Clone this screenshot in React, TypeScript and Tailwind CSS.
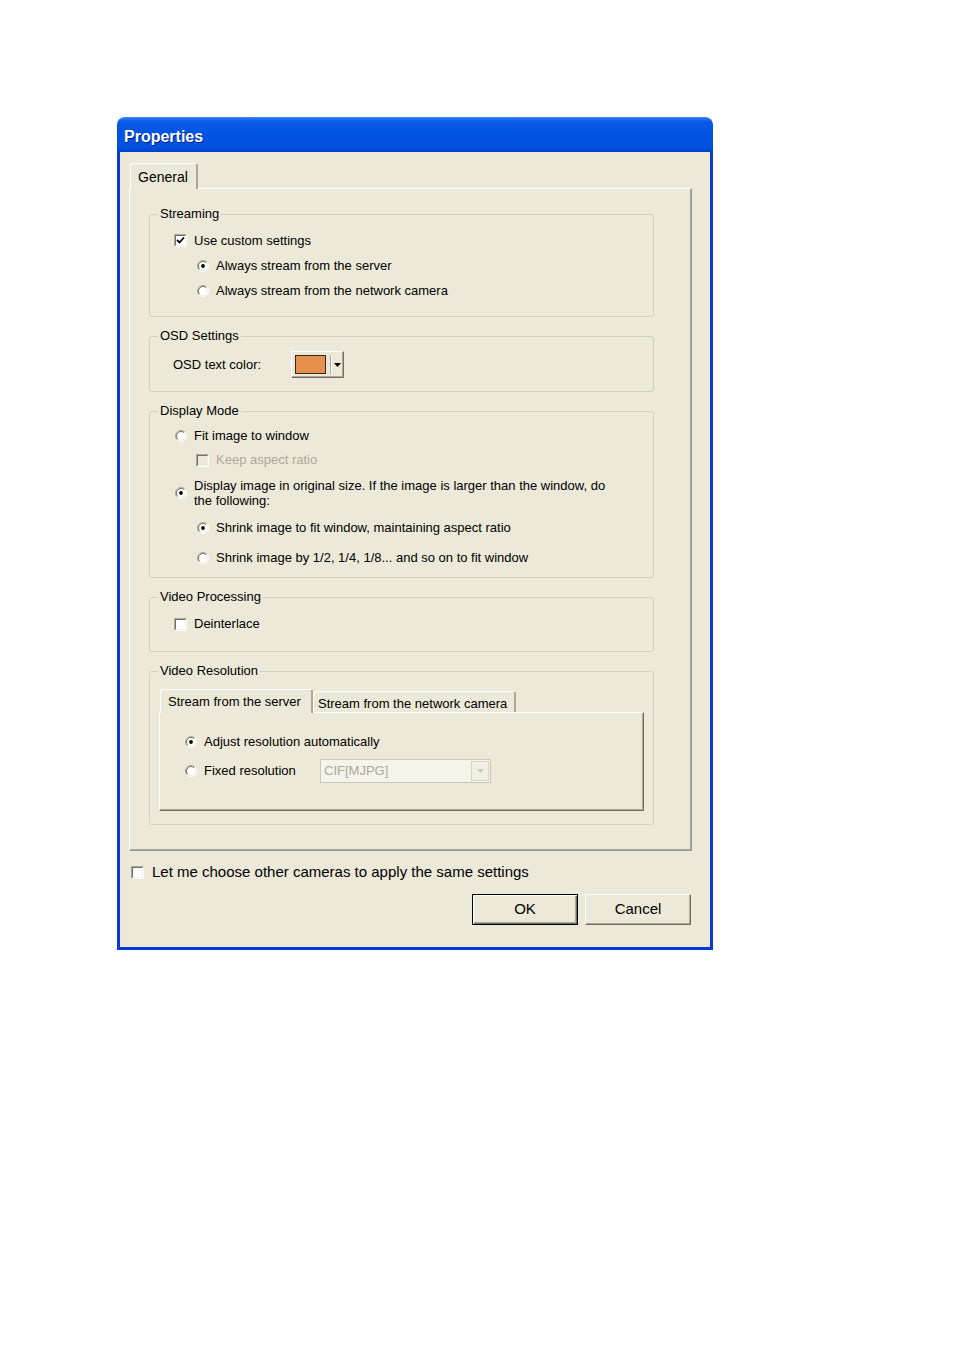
import React, { ReactNode } from "react";

const Radio = ({ checked = false }: { checked?: boolean }) => (
  <svg width="12" height="12" viewBox="0 0 12 12" className="shrink-0">
    <circle cx="6" cy="6" r="5" fill="#ffffff" />
    <path d="M2.1 9.9 A5.5 5.5 0 0 1 9.9 2.1" stroke="#aca899" fill="none" />
    <path d="M9.9 2.1 A5.5 5.5 0 0 1 2.1 9.9" stroke="#ffffff" fill="none" />
    <path d="M2.8 9.2 A4.5 4.5 0 0 1 9.2 2.8" stroke="#716f64" fill="none" />
    <path d="M9.2 2.8 A4.5 4.5 0 0 1 2.8 9.2" stroke="#f1efe2" fill="none" />
    {checked && <circle cx="6" cy="6" r="1.9" fill="#000000" />}
  </svg>
);

const Check = ({ checked = false, disabled = false }: { checked?: boolean; disabled?: boolean }) => (
  <div className="w-[13px] h-[13px] shrink-0 border border-t-[#aca899] border-l-[#aca899] border-r-white border-b-white">
    <div
      className={`w-full h-full border border-t-[#716f64] border-l-[#716f64] border-r-[#f1efe2] border-b-[#f1efe2] flex items-center justify-center ${
        disabled ? "bg-[#ece9d8]" : "bg-white"
      }`}
    >
      {checked && (
        <svg width="9" height="9" viewBox="0 0 9 9">
          <path d="M1 4 L3.5 6.5 L8 1.5" stroke="#000000" strokeWidth="1.8" fill="none" />
        </svg>
      )}
    </div>
  </div>
);

type GroupProps = { title: string; className: string; children: ReactNode };

const Group = ({ title, className, children }: GroupProps) => (
  <div className={`relative w-[505px] border border-[#d0d0bf] rounded-[3px] ${className}`}>
    <span className="absolute -top-[9px] left-[8px] bg-[#ece9d8] px-[2px] leading-[16px]">{title}</span>
    {children}
  </div>
);

const App = () => {
  return (
    <div className="min-h-screen bg-white pt-[117px] pl-[117px] font-['Liberation_Sans',Arial,sans-serif] text-[13px] text-black">
      <div className="w-[596px]">
        {/* title bar */}
        <div className="h-[35px] rounded-t-[8px] bg-[linear-gradient(180deg,#3b87f5_0%,#0b5ae8_12%,#0054e3_50%,#0052e1_85%,#0040c8_100%)] flex items-center pl-[7px] pt-[4px]">
          <span className="text-white font-bold text-[16px] [text-shadow:1px_1px_0_#0a1e8a]">Properties</span>
        </div>

        <div className="border-x-[3px] border-b-[3px] border-[#0839d6]">
          <div className="h-[795px] bg-[#ece9d8] pt-[11px] pl-[9px]">
            {/* tab strip */}
            <div className="h-[25px] flex items-end">
              <div className="relative z-10 ml-[1px] w-[68px] h-[26px] -mb-[1px] bg-[#ece9d8] border-t border-l border-white border-r-2 border-r-[#aca899] rounded-t-[3px] pl-[7px] pt-[3px] text-[14px]">
                General
              </div>
            </div>

            {/* tab panel */}
            <div className="w-[563px] h-[663px] border border-t-white border-l-white border-r-[#919b9c] border-b-[#919b9c] shadow-[inset_-1px_-1px_0_#aca899] pl-[19px] pt-[25px]">
              <Group title="Streaming" className="h-[103px] pt-[13px]">
                <div className="h-[25px] flex items-center gap-[7px] pl-[24px]">
                  <Check checked />
                  <span>Use custom settings</span>
                </div>
                <div className="h-[25px] flex items-center gap-[7px] pl-[47px]">
                  <Radio checked />
                  <span>Always stream from the server</span>
                </div>
                <div className="h-[25px] flex items-center gap-[7px] pl-[47px]">
                  <Radio />
                  <span>Always stream from the network camera</span>
                </div>
              </Group>

              <Group title="OSD Settings" className="mt-[19px] h-[56px] pt-[14px]">
                <div className="h-[27px] flex items-center pl-[23px]">
                  <span className="w-[118px]">OSD text color:</span>
                  <div className="w-[53px] h-[27px] border border-t-white border-l-white border-r-[#716f64] border-b-[#716f64] shadow-[inset_-1px_-1px_0_#aca899] flex items-center pl-[3px]">
                    <div className="w-[31px] h-[19px] bg-[#e8914c] border border-[#2b2b2b]" />
                    <div className="ml-[4px] w-[2px] h-[19px] border-l border-l-[#aca899] border-r border-r-white" />
                    <svg width="7" height="4" viewBox="0 0 7 4" className="ml-[2px]">
                      <path d="M0 0 H7 L3.5 4 Z" fill="#000000" />
                    </svg>
                  </div>
                </div>
              </Group>

              <Group title="Display Mode" className="mt-[19px] h-[167px] pt-[12px]">
                <div className="h-[24px] flex items-center gap-[7px] pl-[25px]">
                  <Radio />
                  <span>Fit image to window</span>
                </div>
                <div className="h-[24px] flex items-center gap-[7px] pl-[46px]">
                  <Check disabled />
                  <span className="text-[#aca899]">Keep aspect ratio</span>
                </div>
                <div className="mt-[6px] h-[30px] flex items-center gap-[7px] pl-[25px]">
                  <Radio checked />
                  <span className="leading-[15px]">
                    Display image in original size. If the image is larger than the window, do
                    <br />
                    the following:
                  </span>
                </div>
                <div className="mt-[8px] h-[24px] flex items-center gap-[7px] pl-[47px]">
                  <Radio checked />
                  <span>Shrink image to fit window, maintaining aspect ratio</span>
                </div>
                <div className="mt-[6px] h-[24px] flex items-center gap-[7px] pl-[47px]">
                  <Radio />
                  <span>Shrink image by 1/2, 1/4, 1/8... and so on to fit window</span>
                </div>
              </Group>

              <Group title="Video Processing" className="mt-[19px] h-[55px] pt-[14px]">
                <div className="h-[24px] flex items-center gap-[7px] pl-[24px]">
                  <Check />
                  <span>Deinterlace</span>
                </div>
              </Group>

              <Group title="Video Resolution" className="mt-[19px] h-[154px] pt-[17px]">
                <div className="h-[23px] flex items-end pl-[9px]">
                  <div className="relative z-10 ml-[1px] w-[153px] h-[24px] -mb-[1px] bg-[#ece9d8] border-t border-l border-white border-r-2 border-r-[#aca899] rounded-t-[3px] pl-[7px] pt-[2px]">
                    Stream from the server
                  </div>
                  <div className="w-[203px] h-[21px] border-t border-l border-white border-r-2 border-r-[#aca899] rounded-t-[3px] pl-[4px] pt-[2px]">
                    Stream from the network camera
                  </div>
                </div>
                <div className="ml-[9px] w-[485px] h-[99px] border border-t-white border-l-white border-r-[#716f64] border-b-[#716f64] shadow-[inset_-1px_-1px_0_#aca899] pl-[25px] pt-[17px]">
                  <div className="h-[24px] flex items-center gap-[7px]">
                    <Radio checked />
                    <span>Adjust resolution automatically</span>
                  </div>
                  <div className="mt-[5px] h-[24px] flex items-center">
                    <Radio />
                    <span className="ml-[7px] w-[116px]">Fixed resolution</span>
                    <div className="w-[171px] h-[24px] border border-[#c9c7ba] bg-[#f5f4ea] flex items-center justify-between pl-[3px] pr-[1px]">
                      <span className="text-[#aca899]">CIF[MJPG]</span>
                      <div className="w-[18px] h-[20px] bg-[#f1efe2] border border-[#d8d5c8] flex items-center justify-center">
                        <svg width="7" height="4" viewBox="0 0 7 4">
                          <path d="M0 0 H7 L3.5 4 Z" fill="#c9c7ba" />
                        </svg>
                      </div>
                    </div>
                  </div>
                </div>
              </Group>
            </div>

            {/* bottom */}
            <div className="mt-[9px] h-[24px] flex items-center gap-[8px] pl-[2px] text-[15px]">
              <Check />
              <span>Let me choose other cameras to apply the same settings</span>
            </div>
            <div className="mt-[10px] flex justify-end gap-[7px] pr-[19px]">
              <button className="w-[106px] h-[31px] border border-black bg-[#ece9d8] shadow-[inset_1px_1px_0_#ffffff,inset_-1px_-1px_0_#716f64,inset_-2px_-2px_0_#aca899] text-[15px]">
                OK
              </button>
              <button className="w-[106px] h-[31px] border border-t-white border-l-white border-r-[#716f64] border-b-[#716f64] bg-[#ece9d8] shadow-[inset_-1px_-1px_0_#aca899] text-[15px]">
                Cancel
              </button>
            </div>
          </div>
        </div>
      </div>
    </div>
  );
};

export default App;
